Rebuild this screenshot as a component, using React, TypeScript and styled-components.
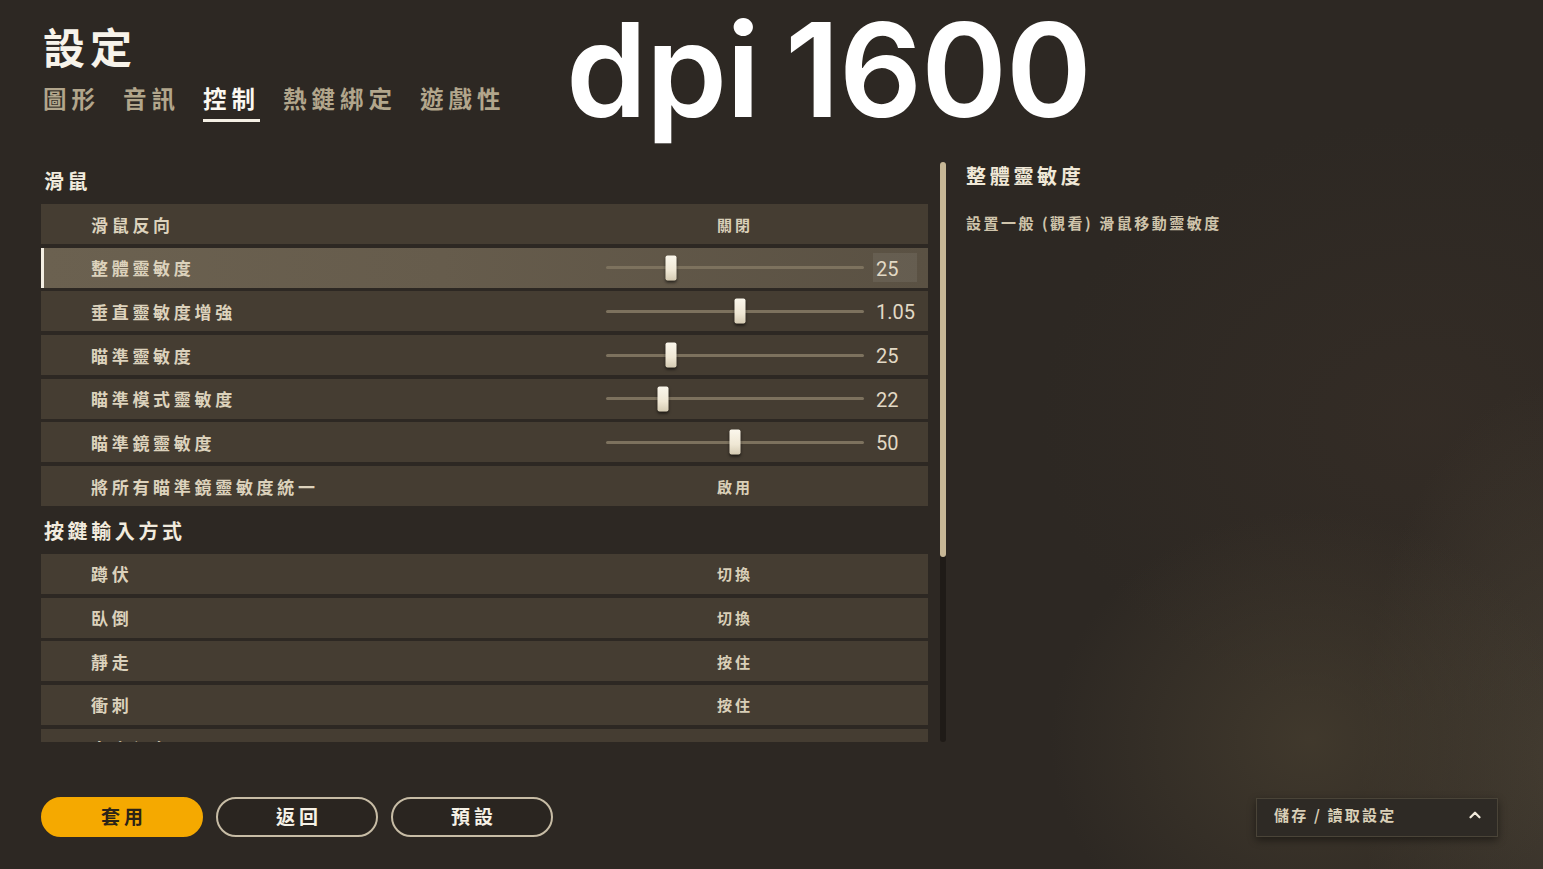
import React from "react"
import styled, { createGlobalStyle } from "styled-components"
import { ChevronUp } from "lucide-react"

const CJK = `"Noto Sans CJK TC", "Noto Sans", sans-serif`

const GlobalStyle = createGlobalStyle`
  html, body {
    margin: 0;
    padding: 0;
    background: #2d2823;
  }
  * {
    box-sizing: border-box;
  }
`

const Page = styled.div`
  position: relative;
  width: 1543px;
  height: 869px;
  overflow: hidden;
  display: flex;
  flex-direction: column;
  font-family: ${CJK};
  background:
    radial-gradient(ellipse 260px 230px at 1310px 740px, rgba(80, 70, 52, 0.55), transparent),
    radial-gradient(ellipse 200px 380px at 1560px 760px, rgba(92, 82, 64, 0.45), transparent),
    radial-gradient(ellipse 380px 300px at 1420px 420px, rgba(58, 48, 40, 0.5), transparent),
    #2d2823;
`

const Header = styled.header`
  padding: 22px 0 0 43px;
  display: flex;
  flex-direction: column;
`

const Title = styled.h1`
  margin: 0;
  font-size: 42px;
  line-height: 48px;
  font-weight: 700;
  letter-spacing: 5px;
  color: #f7f3ea;
`

const Tabs = styled.nav`
  display: flex;
  gap: 23px;
  margin-top: 13px;
`

const Tab: any = styled.div`
  font-size: 23.5px;
  line-height: 30px;
  font-weight: 700;
  letter-spacing: 5px;
  color: ${(p: any) => (p.active ? "#fbf8f1" : "#b2a68c")};
  padding-bottom: 6px;
  border-bottom: 3px solid ${(p: any) => (p.active ? "#f4efe4" : "transparent")};
`

const Dpi = styled.div`
  position: absolute;
  left: 566px;
  top: 5px;
  font-family: Inter, "Noto Sans", sans-serif;
  font-weight: 600;
  font-size: 130px;
  line-height: 130px;
  color: #ffffff;
  letter-spacing: -1px;
  word-spacing: -6px;
`

const Main = styled.main`
  display: flex;
  margin-top: 38px;
  height: 582px;
`

const ListArea = styled.div`
  display: flex;
  gap: 12px;
  margin-left: 41px;
`

const Scroller = styled.div`
  width: 887px;
  height: 582px;
  overflow: hidden;
`

const SectionTitle = styled.h2`
  margin: 0;
  padding: 7px 0 9px 3px;
  font-size: 20px;
  line-height: 28px;
  font-weight: 700;
  letter-spacing: 3.6px;
  color: #f1ebde;
`

const Row: any = styled.div`
  position: relative;
  height: 40px;
  margin-bottom: 3.7px;
  display: grid;
  grid-template-columns: 1fr 258px 44px;
  column-gap: 9px;
  align-items: center;
  padding-right: 11px;
  background: ${(p: any) =>
    p.active
      ? "linear-gradient(90deg, #6b6150 0%, #665c4c 45%, #5a5143 100%)"
      : "#453d32"};
  border-left: 3px solid ${(p: any) => (p.active ? "#f3eee2" : "transparent")};
`

const Label = styled.span`
  padding-left: 47px;
  font-size: 17px;
  font-weight: 700;
  letter-spacing: 3.7px;
  color: #dcd2bc;
  white-space: nowrap;
`

const Choice = styled.span`
  text-align: center;
  font-size: 15px;
  font-weight: 700;
  letter-spacing: 3px;
  color: #d9cfb8;
`

const Track = styled.div`
  position: relative;
  height: 3px;
  background: #7d725e;
  border-radius: 2px;
`

const Thumb = styled.div`
  position: absolute;
  top: 50%;
  width: 11px;
  height: 25px;
  transform: translate(-50%, -50%);
  border-radius: 2px;
  background: linear-gradient(180deg, #fbf7ec 0%, #efe7d4 60%, #d5cbb3 100%);
  box-shadow: 0 2px 3px rgba(0, 0, 0, 0.6);
`

const Value: any = styled.span`
  height: 29px;
  display: flex;
  align-items: center;
  padding: 2px 0 0 3px;
  font-family: Roboto, "Liberation Sans", sans-serif;
  font-size: 20px;
  color: #e2d9c5;
  background: ${(p: any) => (p.active ? "rgba(255, 255, 255, 0.07)" : "transparent")};
`

const ScrollBar = styled.div`
  width: 6px;
  margin-top: 2px;
  height: 580px;
  border-radius: 3px;
  background: #1f1b17;
  display: flex;
  flex-direction: column;
`

const ScrollThumb = styled.div`
  height: 395px;
  border-radius: 3px;
  background: #c7b796;
`

const Info = styled.aside`
  margin-left: 20px;
  display: flex;
  flex-direction: column;
`

const InfoTitle = styled.h3`
  margin: 2px 0 0;
  font-size: 20px;
  line-height: 28px;
  font-weight: 700;
  letter-spacing: 3.7px;
  color: #f0e8d7;
`

const InfoText = styled.p`
  margin: 23px 0 0;
  font-size: 15px;
  line-height: 20px;
  font-weight: 700;
  letter-spacing: 2.5px;
  color: #cfc4ab;
`

const Footer = styled.footer`
  display: flex;
  justify-content: space-between;
  align-items: center;
  margin-top: 55px;
  padding: 0 45px 0 41px;
`

const ButtonGroup = styled.div`
  display: flex;
  gap: 13px;
`

const Button: any = styled.button`
  width: 162px;
  height: 40px;
  border-radius: 20px;
  padding: 0 0 3px 4px;
  font-family: ${CJK};
  font-size: 19px;
  font-weight: 700;
  letter-spacing: 4px;
  cursor: pointer;
  color: ${(p: any) => (p.primary ? "#2b2317" : "#f6f1e6")};
  background: ${(p: any) => (p.primary ? "#f5a900" : "#2a2520")};
  border: 2px solid ${(p: any) => (p.primary ? "#f5a900" : "#c7bca5")};
`

const SaveMenu = styled.div`
  width: 242px;
  height: 39px;
  display: flex;
  align-items: center;
  justify-content: space-between;
  padding: 0 13px 5px 17px;
  background: #2e2a25;
  border: 1px solid #4a4438;
  box-shadow: 0 3px 8px rgba(0, 0, 0, 0.45);
  font-size: 15px;
  font-weight: 700;
  letter-spacing: 2.2px;
  color: #d9cfb7;
`

type Item = {
  label: string
  choice?: string
  pos?: number
  value?: string
  active?: boolean
}

const mouseRows: Item[] = [
  { label: "滑鼠反向", choice: "關閉" },
  { label: "整體靈敏度", pos: 25, value: "25", active: true },
  { label: "垂直靈敏度增強", pos: 52, value: "1.05" },
  { label: "瞄準靈敏度", pos: 25, value: "25" },
  { label: "瞄準模式靈敏度", pos: 22, value: "22" },
  { label: "瞄準鏡靈敏度", pos: 50, value: "50" },
  { label: "將所有瞄準鏡靈敏度統一", choice: "啟用" },
]

const keyRows: Item[] = [
  { label: "蹲伏", choice: "切換" },
  { label: "臥倒", choice: "切換" },
  { label: "靜走", choice: "按住" },
  { label: "衝刺", choice: "按住" },
  { label: "自由視角", choice: "按住" },
]

const SettingRow = ({ item }: { item: Item }) => (
  <Row active={item.active}>
    <Label>{item.label}</Label>
    {item.choice ? (
      <Choice>{item.choice}</Choice>
    ) : (
      <Track>
        <Thumb style={{ left: `${item.pos}%` }} />
      </Track>
    )}
    {item.value ? <Value active={item.active}>{item.value}</Value> : <span />}
  </Row>
)

export default function App() {
  const tabs = ["圖形", "音訊", "控制", "熱鍵綁定", "遊戲性"]
  return (
    <Page>
      <GlobalStyle />
      <Header>
        <Title>設定</Title>
        <Tabs>
          {tabs.map(t => (
            <Tab key={t} active={t === "控制"}>
              {t}
            </Tab>
          ))}
        </Tabs>
      </Header>
      <Dpi>dpi 1600</Dpi>

      <Main>
        <ListArea>
          <Scroller>
            <SectionTitle>滑鼠</SectionTitle>
            {mouseRows.map(r => (
              <SettingRow key={r.label} item={r} />
            ))}
            <SectionTitle>按鍵輸入方式</SectionTitle>
            {keyRows.map(r => (
              <SettingRow key={r.label} item={r} />
            ))}
          </Scroller>
          <ScrollBar>
            <ScrollThumb />
          </ScrollBar>
        </ListArea>
        <Info>
          <InfoTitle>整體靈敏度</InfoTitle>
          <InfoText>設置一般 (觀看) 滑鼠移動靈敏度</InfoText>
        </Info>
      </Main>

      <Footer>
        <ButtonGroup>
          <Button primary>套用</Button>
          <Button>返回</Button>
          <Button>預設</Button>
        </ButtonGroup>
        <SaveMenu>
          <span>儲存 / 讀取設定</span>
          <ChevronUp size={18} strokeWidth={3} color="#f2ebdc" />
        </SaveMenu>
      </Footer>
    </Page>
  )
}
